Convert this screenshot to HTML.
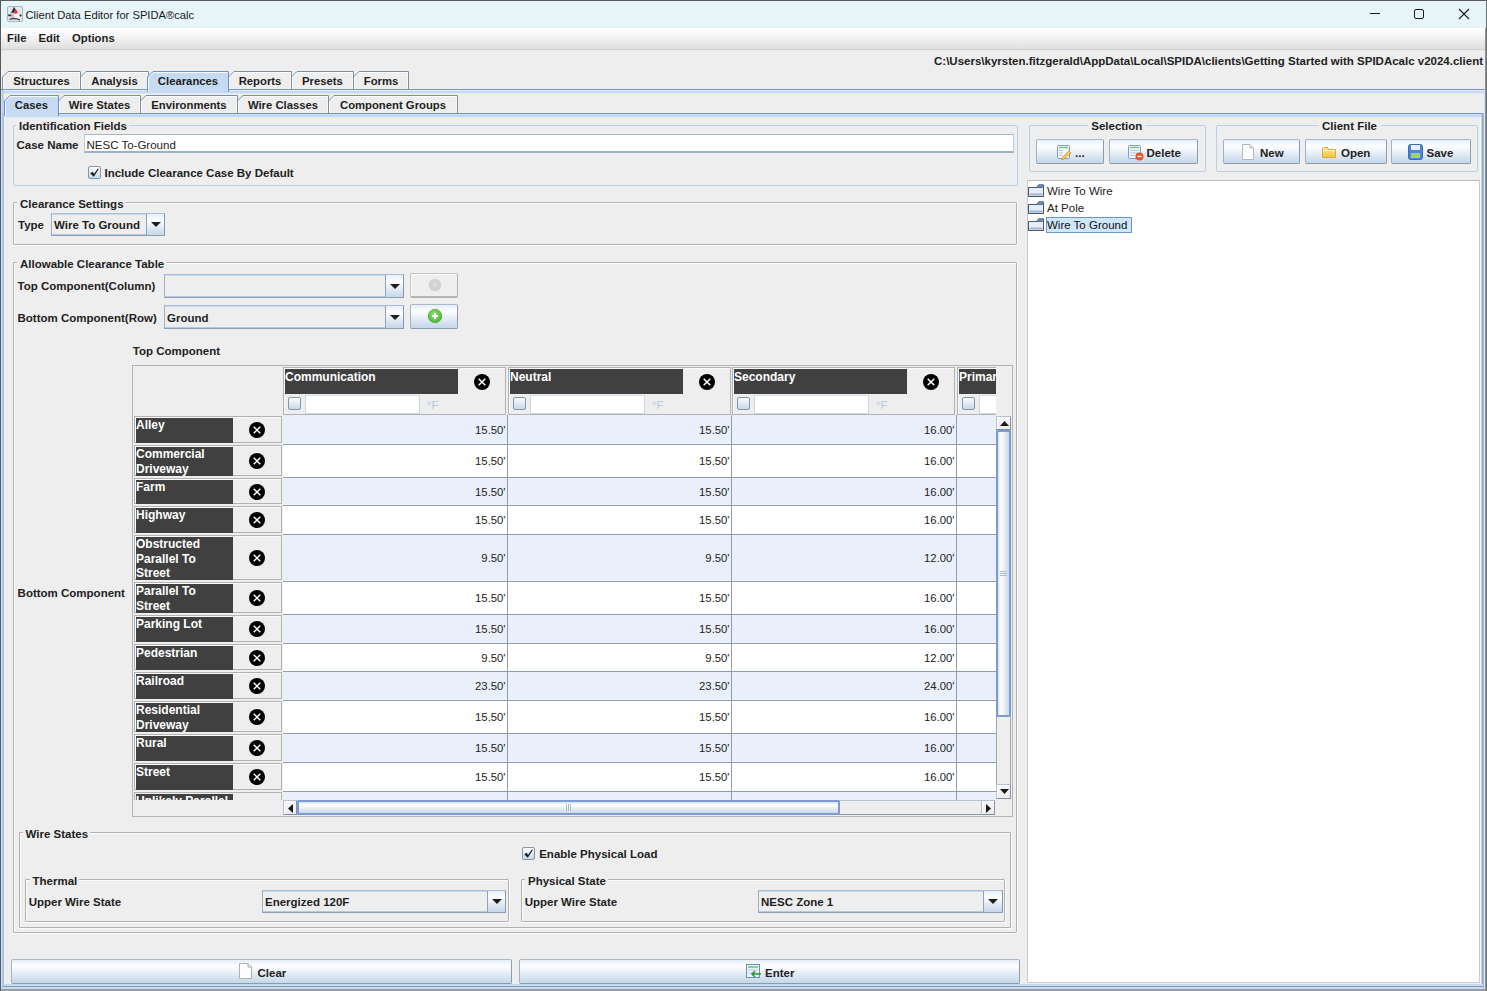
<!DOCTYPE html>
<html><head><meta charset="utf-8"><style>
html,body{margin:0;padding:0;}
body{width:1487px;height:991px;overflow:hidden;position:relative;background:#eeeeee;font-family:"Liberation Sans",sans-serif;}
div{position:absolute;box-sizing:border-box;}
</style></head><body>
<div style="left:0px;top:0px;width:1487px;height:991px;background:#eeeeee"></div>
<div style="left:1px;top:1px;width:1485px;height:27px;background:#e7f5f8"></div>
<svg style="position:absolute;left:7px;top:6px;" width="16" height="16" viewBox="0 0 16 16">
<rect x="0.5" y="0.5" width="15" height="15" rx="1.5" fill="#e8e6ee" stroke="#a7b6c6"/>
<path d="M3.5 8 L7 0.8 L10.5 7 Z" fill="#223030"/>
<path d="M4 7 L11 6 L12.5 13 L4 13 Z" fill="#f4f4f4"/>
<path d="M4 8 L7 7 L7 13 L4 13 Z" fill="#c4c4c4"/>
<circle cx="8.7" cy="5.9" r="1.9" fill="#f2323e"/>
<ellipse cx="2.6" cy="9.3" rx="1.8" ry="1.1" fill="#3a3a30"/>
<ellipse cx="3" cy="8.4" rx="1.2" ry="0.6" fill="#6aa8e0"/>
<circle cx="13.5" cy="9.4" r="1" fill="#1e1e1e"/>
<path d="M2.5 13.3 Q8 11.8 13 14" fill="none" stroke="#3a3a3a" stroke-width="1.2"/>
</svg>
<div style="top:6.92px;height:16px;line-height:16px;font-size:11.2px;font-weight:normal;color:#1a1a1a;font-family:'Liberation Sans',sans-serif;white-space:pre;left:25.5px;">Client Data Editor for SPIDA®calc</div>
<div style="left:1370px;top:13px;width:10px;height:1px;background:#1a1a1a"></div>
<div style="left:1414px;top:9px;width:10px;height:10px;border:1px solid #1a1a1a;border-radius:2px;box-sizing:border-box"></div>
<svg style="position:absolute;left:1458px;top:8px;" width="12" height="12" viewBox="0 0 12 12"><path d="M1 1 L11 11 M11 1 L1 11" stroke="#1a1a1a" stroke-width="1.1"/></svg>
<div style="left:1px;top:28px;width:1485px;height:21px;background:linear-gradient(#ffffff 0%,#f7f7f7 35%,#dedede 100%)"></div>
<div style="left:1px;top:49px;width:1485px;height:1px;background:#d2d2d2"></div>
<div style="left:1px;top:50px;width:1485px;height:1px;background:#e9e9e9"></div>
<div style="top:30.48px;height:16px;line-height:16px;font-size:11.3px;font-weight:bold;color:#1e1e1e;font-family:'Liberation Sans',sans-serif;white-space:pre;left:7px;">File</div>
<div style="top:30.48px;height:16px;line-height:16px;font-size:11.3px;font-weight:bold;color:#1e1e1e;font-family:'Liberation Sans',sans-serif;white-space:pre;left:38.5px;">Edit</div>
<div style="top:30.48px;height:16px;line-height:16px;font-size:11.3px;font-weight:bold;color:#1e1e1e;font-family:'Liberation Sans',sans-serif;white-space:pre;left:72px;">Options</div>
<div style="top:53.02px;height:16px;line-height:16px;font-size:11.5px;font-weight:bold;color:#222;font-family:'Liberation Sans',sans-serif;white-space:pre;left:483px;width:1000px;text-align:right;">C:\Users\kyrsten.fitzgerald\AppData\Local\SPIDA\clients\Getting Started with SPIDAcalc v2024.client</div>
<svg style="position:absolute;left:2px;top:71px;" width="79" height="18" viewBox="0 0 79 18"><path d="M0.5 18 L0.5 6.0 L6.0 0.5 L78.5 0.5 L78.5 18" fill="#eeeeee" stroke="#7f8e9e" stroke-width="1"/><path d="M1.5 18 L1.5 6.5 L6.5 1.5 L77.5 1.5" fill="none" stroke="#ffffff" stroke-opacity="0.85" stroke-width="1"/><path d="M77.5 1.5 L77.5 18" fill="none" stroke="#ffffff" stroke-opacity="0.6" stroke-width="1"/></svg>
<div style="top:73.08px;height:16px;line-height:16px;font-size:11.3px;font-weight:bold;color:#1e1e1e;font-family:'Liberation Sans',sans-serif;white-space:pre;left:-458.5px;width:1000px;text-align:center;">Structures</div>
<svg style="position:absolute;left:80px;top:71px;" width="69" height="18" viewBox="0 0 69 18"><path d="M0.5 18 L0.5 6.0 L6.0 0.5 L68.5 0.5 L68.5 18" fill="#eeeeee" stroke="#7f8e9e" stroke-width="1"/><path d="M1.5 18 L1.5 6.5 L6.5 1.5 L67.5 1.5" fill="none" stroke="#ffffff" stroke-opacity="0.85" stroke-width="1"/><path d="M67.5 1.5 L67.5 18" fill="none" stroke="#ffffff" stroke-opacity="0.6" stroke-width="1"/></svg>
<div style="top:73.08px;height:16px;line-height:16px;font-size:11.3px;font-weight:bold;color:#1e1e1e;font-family:'Liberation Sans',sans-serif;white-space:pre;left:-385.5px;width:1000px;text-align:center;">Analysis</div>
<svg style="position:absolute;left:228px;top:71px;" width="64" height="18" viewBox="0 0 64 18"><path d="M0.5 18 L0.5 6.0 L6.0 0.5 L63.5 0.5 L63.5 18" fill="#eeeeee" stroke="#7f8e9e" stroke-width="1"/><path d="M1.5 18 L1.5 6.5 L6.5 1.5 L62.5 1.5" fill="none" stroke="#ffffff" stroke-opacity="0.85" stroke-width="1"/><path d="M62.5 1.5 L62.5 18" fill="none" stroke="#ffffff" stroke-opacity="0.6" stroke-width="1"/></svg>
<div style="top:73.08px;height:16px;line-height:16px;font-size:11.3px;font-weight:bold;color:#1e1e1e;font-family:'Liberation Sans',sans-serif;white-space:pre;left:-240.0px;width:1000px;text-align:center;">Reports</div>
<svg style="position:absolute;left:291px;top:71px;" width="63" height="18" viewBox="0 0 63 18"><path d="M0.5 18 L0.5 6.0 L6.0 0.5 L62.5 0.5 L62.5 18" fill="#eeeeee" stroke="#7f8e9e" stroke-width="1"/><path d="M1.5 18 L1.5 6.5 L6.5 1.5 L61.5 1.5" fill="none" stroke="#ffffff" stroke-opacity="0.85" stroke-width="1"/><path d="M61.5 1.5 L61.5 18" fill="none" stroke="#ffffff" stroke-opacity="0.6" stroke-width="1"/></svg>
<div style="top:73.08px;height:16px;line-height:16px;font-size:11.3px;font-weight:bold;color:#1e1e1e;font-family:'Liberation Sans',sans-serif;white-space:pre;left:-177.5px;width:1000px;text-align:center;">Presets</div>
<svg style="position:absolute;left:353px;top:71px;" width="56" height="18" viewBox="0 0 56 18"><path d="M0.5 18 L0.5 6.0 L6.0 0.5 L55.5 0.5 L55.5 18" fill="#eeeeee" stroke="#7f8e9e" stroke-width="1"/><path d="M1.5 18 L1.5 6.5 L6.5 1.5 L54.5 1.5" fill="none" stroke="#ffffff" stroke-opacity="0.85" stroke-width="1"/><path d="M54.5 1.5 L54.5 18" fill="none" stroke="#ffffff" stroke-opacity="0.6" stroke-width="1"/></svg>
<div style="top:73.08px;height:16px;line-height:16px;font-size:11.3px;font-weight:bold;color:#1e1e1e;font-family:'Liberation Sans',sans-serif;white-space:pre;left:-119.0px;width:1000px;text-align:center;">Forms</div>
<div style="left:1px;top:89px;width:1485px;height:1px;background:#7b93cc"></div>
<div style="left:1px;top:90px;width:1485px;height:1px;background:#e3ecf7"></div>
<div style="left:1px;top:91px;width:1485px;height:2px;background:#c6daf1"></div>
<div style="left:1px;top:93px;width:1485px;height:1px;background:#dfe8f3"></div>
<div style="left:1px;top:90px;width:1px;height:897px;background:#cfe0f4"></div>
<div style="left:2px;top:90px;width:2px;height:897px;background:#b9d1ee"></div>
<div style="left:1484px;top:90px;width:1px;height:899px;background:#d0e4fc"></div>
<div style="left:1px;top:987px;width:1485px;height:2px;background:#c6daf1"></div>
<svg style="position:absolute;left:147px;top:71px;" width="82" height="21" viewBox="0 0 82 21"><path d="M0.5 21 L0.5 6.0 L6.0 0.5 L81.5 0.5 L81.5 21" fill="#c6dbf1" stroke="#6f8fd0" stroke-width="1"/><path d="M1.5 21 L1.5 6.5 L6.5 1.5 L80.5 1.5" fill="none" stroke="#ffffff" stroke-opacity="0.85" stroke-width="1"/></svg>
<div style="top:73.08px;height:16px;line-height:16px;font-size:11.3px;font-weight:bold;color:#1e1e1e;font-family:'Liberation Sans',sans-serif;white-space:pre;left:-312.0px;width:1000px;text-align:center;">Clearances</div>
<svg style="position:absolute;left:58px;top:95px;" width="83" height="18" viewBox="0 0 83 18"><path d="M0.5 18 L0.5 6.0 L6.0 0.5 L82.5 0.5 L82.5 18" fill="#eeeeee" stroke="#7f8e9e" stroke-width="1"/><path d="M1.5 18 L1.5 6.5 L6.5 1.5 L81.5 1.5" fill="none" stroke="#ffffff" stroke-opacity="0.85" stroke-width="1"/><path d="M81.5 1.5 L81.5 18" fill="none" stroke="#ffffff" stroke-opacity="0.6" stroke-width="1"/></svg>
<div style="top:97.08px;height:16px;line-height:16px;font-size:11.3px;font-weight:bold;color:#1e1e1e;font-family:'Liberation Sans',sans-serif;white-space:pre;left:-400.5px;width:1000px;text-align:center;">Wire States</div>
<svg style="position:absolute;left:140px;top:95px;" width="98" height="18" viewBox="0 0 98 18"><path d="M0.5 18 L0.5 6.0 L6.0 0.5 L97.5 0.5 L97.5 18" fill="#eeeeee" stroke="#7f8e9e" stroke-width="1"/><path d="M1.5 18 L1.5 6.5 L6.5 1.5 L96.5 1.5" fill="none" stroke="#ffffff" stroke-opacity="0.85" stroke-width="1"/><path d="M96.5 1.5 L96.5 18" fill="none" stroke="#ffffff" stroke-opacity="0.6" stroke-width="1"/></svg>
<div style="top:97.08px;height:16px;line-height:16px;font-size:11.3px;font-weight:bold;color:#1e1e1e;font-family:'Liberation Sans',sans-serif;white-space:pre;left:-311.0px;width:1000px;text-align:center;">Environments</div>
<svg style="position:absolute;left:237px;top:95px;" width="92" height="18" viewBox="0 0 92 18"><path d="M0.5 18 L0.5 6.0 L6.0 0.5 L91.5 0.5 L91.5 18" fill="#eeeeee" stroke="#7f8e9e" stroke-width="1"/><path d="M1.5 18 L1.5 6.5 L6.5 1.5 L90.5 1.5" fill="none" stroke="#ffffff" stroke-opacity="0.85" stroke-width="1"/><path d="M90.5 1.5 L90.5 18" fill="none" stroke="#ffffff" stroke-opacity="0.6" stroke-width="1"/></svg>
<div style="top:97.08px;height:16px;line-height:16px;font-size:11.3px;font-weight:bold;color:#1e1e1e;font-family:'Liberation Sans',sans-serif;white-space:pre;left:-217.0px;width:1000px;text-align:center;">Wire Classes</div>
<svg style="position:absolute;left:328px;top:95px;" width="130" height="18" viewBox="0 0 130 18"><path d="M0.5 18 L0.5 6.0 L6.0 0.5 L129.5 0.5 L129.5 18" fill="#eeeeee" stroke="#7f8e9e" stroke-width="1"/><path d="M1.5 18 L1.5 6.5 L6.5 1.5 L128.5 1.5" fill="none" stroke="#ffffff" stroke-opacity="0.85" stroke-width="1"/><path d="M128.5 1.5 L128.5 18" fill="none" stroke="#ffffff" stroke-opacity="0.6" stroke-width="1"/></svg>
<div style="top:97.08px;height:16px;line-height:16px;font-size:11.3px;font-weight:bold;color:#1e1e1e;font-family:'Liberation Sans',sans-serif;white-space:pre;left:-107.0px;width:1000px;text-align:center;">Component Groups</div>
<div style="left:4px;top:113px;width:1480px;height:1px;background:#7b93cc"></div>
<div style="left:4px;top:114px;width:1479px;height:3px;background:#c6daf1"></div>
<div style="left:4px;top:117px;width:1479px;height:1px;background:#e3ebf5"></div>
<div style="left:2px;top:113px;width:2px;height:874px;background:#a9c5ec"></div>
<div style="left:4px;top:114px;width:1px;height:872px;background:#e4edf8"></div>
<div style="left:5px;top:117px;width:1px;height:868px;background:#f3f1f1"></div>
<div style="left:1480px;top:117px;width:1px;height:866px;background:#f4f8fc"></div>
<div style="left:1481px;top:114px;width:1px;height:872px;background:#c8dcf0"></div>
<div style="left:1482px;top:113px;width:1px;height:874px;background:#90a4ba"></div>
<div style="left:1483px;top:113px;width:1px;height:874px;background:#a9bdd4"></div>
<div style="left:3px;top:986px;width:1481px;height:1px;background:#8597ab"></div>
<div style="left:4px;top:984px;width:1479px;height:2px;background:#c6daf1"></div>
<svg style="position:absolute;left:4px;top:95px;" width="55" height="21" viewBox="0 0 55 21"><path d="M0.5 21 L0.5 6.0 L6.0 0.5 L54.5 0.5 L54.5 21" fill="#c6dbf1" stroke="#6f8fd0" stroke-width="1"/><path d="M1.5 21 L1.5 6.5 L6.5 1.5 L53.5 1.5" fill="none" stroke="#ffffff" stroke-opacity="0.85" stroke-width="1"/></svg>
<div style="top:97.08px;height:16px;line-height:16px;font-size:11.3px;font-weight:bold;color:#1e1e1e;font-family:'Liberation Sans',sans-serif;white-space:pre;left:-468.5px;width:1000px;text-align:center;">Cases</div>
<div style="left:13px;top:125px;width:1005px;height:61px;border:1px solid #b9d0e8;border-radius:2px;"></div>
<div style="left:16px;top:123px;width:113px;height:4px;background:#eeeeee"></div>
<div style="top:118.02px;height:16px;line-height:16px;font-size:11.5px;font-weight:bold;color:#222;font-family:'Liberation Sans',sans-serif;white-space:pre;left:19px;">Identification Fields</div>
<div style="top:137.02px;height:16px;line-height:16px;font-size:11.5px;font-weight:bold;color:#222;font-family:'Liberation Sans',sans-serif;white-space:pre;left:16.5px;">Case Name</div>
<div style="left:84px;top:134px;width:930px;height:19px;border:1px solid #c3ccd6;border-top-color:#aab6c3;border-bottom:2px solid #9fb0c4;background:#ffffff;"></div>
<div style="top:137.02px;height:16px;line-height:16px;font-size:11.5px;font-weight:normal;color:#222;font-family:'Liberation Sans',sans-serif;white-space:pre;left:86.5px;">NESC To-Ground</div>
<svg style="position:absolute;left:88px;top:166px;" width="13" height="13" viewBox="0 0 13 13"><defs><linearGradient id="cbg" x1="0" y1="0" x2="0" y2="1"><stop offset="0" stop-color="#ffffff"/><stop offset="1" stop-color="#c4d6e8"/></linearGradient></defs><rect x="0.5" y="0.5" width="12" height="12" rx="1.5" fill="url(#cbg)" stroke="#8296ae"/><path d="M2.2 7.2 L4.8 5.8 L6.0 8.0 L9.8 2.4 L10.8 2.9 L5.8 10.8 Z" fill="#1a1a1a"/></svg>
<div style="top:164.52px;height:16px;line-height:16px;font-size:11.5px;font-weight:bold;color:#222;font-family:'Liberation Sans',sans-serif;white-space:pre;left:104.5px;">Include Clearance Case By Default</div>
<div style="left:13px;top:202px;width:1004px;height:43px;border:1px solid #b1b1b1;border-radius:1px;"></div>
<div style="left:14px;top:203px;width:1002px;height:41px;border-left:1px solid #fbfbfb;border-top:1px solid #fbfbfb;"></div>
<div style="left:13px;top:245px;width:1005px;height:1px;background:#fbfbfb"></div>
<div style="left:1017px;top:202px;width:1px;height:44px;background:#fbfbfb"></div>
<div style="left:17px;top:200px;width:108.5px;height:4px;background:#eeeeee"></div>
<div style="top:195.52px;height:16px;line-height:16px;font-size:11.5px;font-weight:bold;color:#222;font-family:'Liberation Sans',sans-serif;white-space:pre;left:20px;">Clearance Settings</div>
<div style="top:216.52px;height:16px;line-height:16px;font-size:11.5px;font-weight:bold;color:#222;font-family:'Liberation Sans',sans-serif;white-space:pre;left:18px;">Type</div>
<div style="left:51px;top:213px;width:114px;height:23px;border:1px solid #9cb0c6;border-top-color:#a9bfd6;border-bottom-color:#8c9fb4;border-right-color:#8597ad;background:#eeeeee;box-shadow:inset 0 1px 0 #c9d8e8, inset 0 -1px 0 #b9c9da;"></div>
<div style="left:146px;top:214px;width:18px;height:21px;border-left:1px solid #8fa3b9;background:linear-gradient(#e6eef7 0%,#ffffff 30%,#e3ecf5 60%,#c6d7e9 100%);"></div>
<svg style="position:absolute;left:150.5px;top:222.0px;" width="10" height="5.0" viewBox="0 0 10 5.0"><path d="M0 0 L10 0 L5.0 5.0 Z" fill="#1e1e1e"/></svg>
<div style="top:217.02px;height:16px;line-height:16px;font-size:11.5px;font-weight:bold;color:#1e1e1e;font-family:'Liberation Sans',sans-serif;white-space:pre;left:54px;">Wire To Ground</div>
<div style="left:13px;top:262px;width:1004px;height:671px;border:1px solid #b1b1b1;border-radius:1px;"></div>
<div style="left:14px;top:263px;width:1002px;height:669px;border-left:1px solid #fbfbfb;border-top:1px solid #fbfbfb;"></div>
<div style="left:13px;top:933px;width:1005px;height:1px;background:#fbfbfb"></div>
<div style="left:1017px;top:262px;width:1px;height:672px;background:#fbfbfb"></div>
<div style="left:17px;top:260px;width:149.2px;height:4px;background:#eeeeee"></div>
<div style="top:255.82px;height:16px;line-height:16px;font-size:11.5px;font-weight:bold;color:#222;font-family:'Liberation Sans',sans-serif;white-space:pre;left:20px;">Allowable Clearance Table</div>
<div style="top:278.32px;height:16px;line-height:16px;font-size:11.5px;font-weight:bold;color:#222;font-family:'Liberation Sans',sans-serif;white-space:pre;left:17.5px;">Top Component(Column)</div>
<div style="top:310.32px;height:16px;line-height:16px;font-size:11.5px;font-weight:bold;color:#222;font-family:'Liberation Sans',sans-serif;white-space:pre;left:17.5px;">Bottom Component(Row)</div>
<div style="left:164px;top:274px;width:240px;height:24px;border:1px solid #9cb0c6;border-top-color:#a9bfd6;border-bottom-color:#8c9fb4;border-right-color:#8597ad;background:#eeeeee;box-shadow:inset 0 1px 0 #c9d8e8, inset 0 -1px 0 #b9c9da;"></div>
<div style="left:385px;top:275px;width:18px;height:22px;border-left:1px solid #8fa3b9;background:linear-gradient(#e6eef7 0%,#ffffff 30%,#e3ecf5 60%,#c6d7e9 100%);"></div>
<svg style="position:absolute;left:389.5px;top:283.5px;" width="10" height="5.0" viewBox="0 0 10 5.0"><path d="M0 0 L10 0 L5.0 5.0 Z" fill="#1e1e1e"/></svg>
<div style="left:410px;top:273px;width:48px;height:25px;border:1px solid #c6c6c6;border-right-color:#b2b2b2;border-bottom:2px solid #b4b4b4;background:#eeeeee;border-radius:2px;box-shadow:inset 1px 1px 0 #fafafa;"></div>
<svg style="position:absolute;left:427.5px;top:278px;" width="14" height="14" viewBox="0 0 14 14"><circle cx="7" cy="7" r="6.3" fill="#d2d2d2"/><path d="M7 4.5 V9.5 M4.5 7 H9.5" stroke="#dcdcdc" stroke-width="1.6"/></svg>
<div style="left:164px;top:305px;width:240px;height:24px;border:1px solid #9cb0c6;border-top-color:#a9bfd6;border-bottom-color:#8c9fb4;border-right-color:#8597ad;background:#eeeeee;box-shadow:inset 0 1px 0 #c9d8e8, inset 0 -1px 0 #b9c9da;"></div>
<div style="left:385px;top:306px;width:18px;height:22px;border-left:1px solid #8fa3b9;background:linear-gradient(#e6eef7 0%,#ffffff 30%,#e3ecf5 60%,#c6d7e9 100%);"></div>
<svg style="position:absolute;left:389.5px;top:314.5px;" width="10" height="5.0" viewBox="0 0 10 5.0"><path d="M0 0 L10 0 L5.0 5.0 Z" fill="#1e1e1e"/></svg>
<div style="top:309.52px;height:16px;line-height:16px;font-size:11.5px;font-weight:bold;color:#1e1e1e;font-family:'Liberation Sans',sans-serif;white-space:pre;left:167px;">Ground</div>
<div style="left:410px;top:304px;width:48px;height:25px;border:1px solid #8b9bb0;border-top-color:#a9b7c7;border-left-color:#a3b1c2;border-radius:2px;background:linear-gradient(#e6eef7 0%,#fdfeff 25%,#f4f8fc 40%,#dbe6f1 70%,#c5d7e9 100%);"></div>
<svg style="position:absolute;left:426.5px;top:308px;" width="16" height="16" viewBox="0 0 16 16"><defs><radialGradient id="gg" cx="0.45" cy="0.4" r="0.65"><stop offset="0" stop-color="#9ae37a"/><stop offset="1" stop-color="#45b02e"/></radialGradient></defs><circle cx="8" cy="8" r="6.8" fill="url(#gg)" stroke="#52a93c" stroke-width="0.8"/><path d="M8 5 V11 M5 8 H11" stroke="#fff" stroke-width="2"/></svg>
<div style="top:343.42px;height:16px;line-height:16px;font-size:11.5px;font-weight:bold;color:#222;font-family:'Liberation Sans',sans-serif;white-space:pre;left:132.8px;">Top Component</div>
<div style="top:584.62px;height:16px;line-height:16px;font-size:11.5px;font-weight:bold;color:#222;font-family:'Liberation Sans',sans-serif;white-space:pre;left:17.6px;">Bottom Component</div>
<div style="left:132px;top:365px;width:881px;height:452px;border:1px solid #b4b4b4;background:#eeeeee;"></div>
<div style="left:283px;top:415px;width:713px;height:29px;background:#e9f0fc"></div>
<div style="left:283px;top:443px;width:713px;height:1px;background:#f0f5fd"></div>
<div style="left:283px;top:444px;width:713px;height:1px;background:#8e9cad"></div>
<div style="top:421.98px;height:16px;line-height:16px;font-size:11.3px;font-weight:normal;color:#222;font-family:'Liberation Sans',sans-serif;white-space:pre;left:-494.5px;width:1000px;text-align:right;">15.50'</div>
<div style="top:421.98px;height:16px;line-height:16px;font-size:11.3px;font-weight:normal;color:#222;font-family:'Liberation Sans',sans-serif;white-space:pre;left:-270.5px;width:1000px;text-align:right;">15.50'</div>
<div style="top:421.98px;height:16px;line-height:16px;font-size:11.3px;font-weight:normal;color:#222;font-family:'Liberation Sans',sans-serif;white-space:pre;left:-45.5px;width:1000px;text-align:right;">16.00'</div>
<div style="left:283px;top:445px;width:713px;height:32px;background:#ffffff"></div>
<div style="left:283px;top:477px;width:713px;height:1px;background:#8e9cad"></div>
<div style="top:453.48px;height:16px;line-height:16px;font-size:11.3px;font-weight:normal;color:#222;font-family:'Liberation Sans',sans-serif;white-space:pre;left:-494.5px;width:1000px;text-align:right;">15.50'</div>
<div style="top:453.48px;height:16px;line-height:16px;font-size:11.3px;font-weight:normal;color:#222;font-family:'Liberation Sans',sans-serif;white-space:pre;left:-270.5px;width:1000px;text-align:right;">15.50'</div>
<div style="top:453.48px;height:16px;line-height:16px;font-size:11.3px;font-weight:normal;color:#222;font-family:'Liberation Sans',sans-serif;white-space:pre;left:-45.5px;width:1000px;text-align:right;">16.00'</div>
<div style="left:283px;top:478px;width:713px;height:27px;background:#e9f0fc"></div>
<div style="left:283px;top:504px;width:713px;height:1px;background:#f0f5fd"></div>
<div style="left:283px;top:505px;width:713px;height:1px;background:#8e9cad"></div>
<div style="top:483.98px;height:16px;line-height:16px;font-size:11.3px;font-weight:normal;color:#222;font-family:'Liberation Sans',sans-serif;white-space:pre;left:-494.5px;width:1000px;text-align:right;">15.50'</div>
<div style="top:483.98px;height:16px;line-height:16px;font-size:11.3px;font-weight:normal;color:#222;font-family:'Liberation Sans',sans-serif;white-space:pre;left:-270.5px;width:1000px;text-align:right;">15.50'</div>
<div style="top:483.98px;height:16px;line-height:16px;font-size:11.3px;font-weight:normal;color:#222;font-family:'Liberation Sans',sans-serif;white-space:pre;left:-45.5px;width:1000px;text-align:right;">16.00'</div>
<div style="left:283px;top:506px;width:713px;height:28px;background:#ffffff"></div>
<div style="left:283px;top:534px;width:713px;height:1px;background:#8e9cad"></div>
<div style="top:512.48px;height:16px;line-height:16px;font-size:11.3px;font-weight:normal;color:#222;font-family:'Liberation Sans',sans-serif;white-space:pre;left:-494.5px;width:1000px;text-align:right;">15.50'</div>
<div style="top:512.48px;height:16px;line-height:16px;font-size:11.3px;font-weight:normal;color:#222;font-family:'Liberation Sans',sans-serif;white-space:pre;left:-270.5px;width:1000px;text-align:right;">15.50'</div>
<div style="top:512.48px;height:16px;line-height:16px;font-size:11.3px;font-weight:normal;color:#222;font-family:'Liberation Sans',sans-serif;white-space:pre;left:-45.5px;width:1000px;text-align:right;">16.00'</div>
<div style="left:283px;top:535px;width:713px;height:46px;background:#e9f0fc"></div>
<div style="left:283px;top:580px;width:713px;height:1px;background:#f0f5fd"></div>
<div style="left:283px;top:581px;width:713px;height:1px;background:#8e9cad"></div>
<div style="top:550.48px;height:16px;line-height:16px;font-size:11.3px;font-weight:normal;color:#222;font-family:'Liberation Sans',sans-serif;white-space:pre;left:-494.5px;width:1000px;text-align:right;">9.50'</div>
<div style="top:550.48px;height:16px;line-height:16px;font-size:11.3px;font-weight:normal;color:#222;font-family:'Liberation Sans',sans-serif;white-space:pre;left:-270.5px;width:1000px;text-align:right;">9.50'</div>
<div style="top:550.48px;height:16px;line-height:16px;font-size:11.3px;font-weight:normal;color:#222;font-family:'Liberation Sans',sans-serif;white-space:pre;left:-45.5px;width:1000px;text-align:right;">12.00'</div>
<div style="left:283px;top:582px;width:713px;height:32px;background:#ffffff"></div>
<div style="left:283px;top:614px;width:713px;height:1px;background:#8e9cad"></div>
<div style="top:590.48px;height:16px;line-height:16px;font-size:11.3px;font-weight:normal;color:#222;font-family:'Liberation Sans',sans-serif;white-space:pre;left:-494.5px;width:1000px;text-align:right;">15.50'</div>
<div style="top:590.48px;height:16px;line-height:16px;font-size:11.3px;font-weight:normal;color:#222;font-family:'Liberation Sans',sans-serif;white-space:pre;left:-270.5px;width:1000px;text-align:right;">15.50'</div>
<div style="top:590.48px;height:16px;line-height:16px;font-size:11.3px;font-weight:normal;color:#222;font-family:'Liberation Sans',sans-serif;white-space:pre;left:-45.5px;width:1000px;text-align:right;">16.00'</div>
<div style="left:283px;top:615px;width:713px;height:28px;background:#e9f0fc"></div>
<div style="left:283px;top:642px;width:713px;height:1px;background:#f0f5fd"></div>
<div style="left:283px;top:643px;width:713px;height:1px;background:#8e9cad"></div>
<div style="top:621.48px;height:16px;line-height:16px;font-size:11.3px;font-weight:normal;color:#222;font-family:'Liberation Sans',sans-serif;white-space:pre;left:-494.5px;width:1000px;text-align:right;">15.50'</div>
<div style="top:621.48px;height:16px;line-height:16px;font-size:11.3px;font-weight:normal;color:#222;font-family:'Liberation Sans',sans-serif;white-space:pre;left:-270.5px;width:1000px;text-align:right;">15.50'</div>
<div style="top:621.48px;height:16px;line-height:16px;font-size:11.3px;font-weight:normal;color:#222;font-family:'Liberation Sans',sans-serif;white-space:pre;left:-45.5px;width:1000px;text-align:right;">16.00'</div>
<div style="left:283px;top:644px;width:713px;height:27px;background:#ffffff"></div>
<div style="left:283px;top:671px;width:713px;height:1px;background:#8e9cad"></div>
<div style="top:649.98px;height:16px;line-height:16px;font-size:11.3px;font-weight:normal;color:#222;font-family:'Liberation Sans',sans-serif;white-space:pre;left:-494.5px;width:1000px;text-align:right;">9.50'</div>
<div style="top:649.98px;height:16px;line-height:16px;font-size:11.3px;font-weight:normal;color:#222;font-family:'Liberation Sans',sans-serif;white-space:pre;left:-270.5px;width:1000px;text-align:right;">9.50'</div>
<div style="top:649.98px;height:16px;line-height:16px;font-size:11.3px;font-weight:normal;color:#222;font-family:'Liberation Sans',sans-serif;white-space:pre;left:-45.5px;width:1000px;text-align:right;">12.00'</div>
<div style="left:283px;top:672px;width:713px;height:28px;background:#e9f0fc"></div>
<div style="left:283px;top:699px;width:713px;height:1px;background:#f0f5fd"></div>
<div style="left:283px;top:700px;width:713px;height:1px;background:#8e9cad"></div>
<div style="top:678.48px;height:16px;line-height:16px;font-size:11.3px;font-weight:normal;color:#222;font-family:'Liberation Sans',sans-serif;white-space:pre;left:-494.5px;width:1000px;text-align:right;">23.50'</div>
<div style="top:678.48px;height:16px;line-height:16px;font-size:11.3px;font-weight:normal;color:#222;font-family:'Liberation Sans',sans-serif;white-space:pre;left:-270.5px;width:1000px;text-align:right;">23.50'</div>
<div style="top:678.48px;height:16px;line-height:16px;font-size:11.3px;font-weight:normal;color:#222;font-family:'Liberation Sans',sans-serif;white-space:pre;left:-45.5px;width:1000px;text-align:right;">24.00'</div>
<div style="left:283px;top:701px;width:713px;height:32px;background:#ffffff"></div>
<div style="left:283px;top:733px;width:713px;height:1px;background:#8e9cad"></div>
<div style="top:709.48px;height:16px;line-height:16px;font-size:11.3px;font-weight:normal;color:#222;font-family:'Liberation Sans',sans-serif;white-space:pre;left:-494.5px;width:1000px;text-align:right;">15.50'</div>
<div style="top:709.48px;height:16px;line-height:16px;font-size:11.3px;font-weight:normal;color:#222;font-family:'Liberation Sans',sans-serif;white-space:pre;left:-270.5px;width:1000px;text-align:right;">15.50'</div>
<div style="top:709.48px;height:16px;line-height:16px;font-size:11.3px;font-weight:normal;color:#222;font-family:'Liberation Sans',sans-serif;white-space:pre;left:-45.5px;width:1000px;text-align:right;">16.00'</div>
<div style="left:283px;top:734px;width:713px;height:28px;background:#e9f0fc"></div>
<div style="left:283px;top:761px;width:713px;height:1px;background:#f0f5fd"></div>
<div style="left:283px;top:762px;width:713px;height:1px;background:#8e9cad"></div>
<div style="top:740.48px;height:16px;line-height:16px;font-size:11.3px;font-weight:normal;color:#222;font-family:'Liberation Sans',sans-serif;white-space:pre;left:-494.5px;width:1000px;text-align:right;">15.50'</div>
<div style="top:740.48px;height:16px;line-height:16px;font-size:11.3px;font-weight:normal;color:#222;font-family:'Liberation Sans',sans-serif;white-space:pre;left:-270.5px;width:1000px;text-align:right;">15.50'</div>
<div style="top:740.48px;height:16px;line-height:16px;font-size:11.3px;font-weight:normal;color:#222;font-family:'Liberation Sans',sans-serif;white-space:pre;left:-45.5px;width:1000px;text-align:right;">16.00'</div>
<div style="left:283px;top:763px;width:713px;height:28px;background:#ffffff"></div>
<div style="left:283px;top:791px;width:713px;height:1px;background:#8e9cad"></div>
<div style="top:769.48px;height:16px;line-height:16px;font-size:11.3px;font-weight:normal;color:#222;font-family:'Liberation Sans',sans-serif;white-space:pre;left:-494.5px;width:1000px;text-align:right;">15.50'</div>
<div style="top:769.48px;height:16px;line-height:16px;font-size:11.3px;font-weight:normal;color:#222;font-family:'Liberation Sans',sans-serif;white-space:pre;left:-270.5px;width:1000px;text-align:right;">15.50'</div>
<div style="top:769.48px;height:16px;line-height:16px;font-size:11.3px;font-weight:normal;color:#222;font-family:'Liberation Sans',sans-serif;white-space:pre;left:-45.5px;width:1000px;text-align:right;">16.00'</div>
<div style="left:283px;top:792px;width:713px;height:8px;background:#e9f0fc"></div>
<div style="left:507px;top:415px;width:1px;height:385px;background:#8e9cad"></div>
<div style="left:731px;top:415px;width:1px;height:385px;background:#8e9cad"></div>
<div style="left:956px;top:415px;width:1px;height:385px;background:#8e9cad"></div>
<div style="left:134px;top:416px;width:148px;height:27px;border:1px solid #b2b2b2;background:#eeeeee;"></div>
<div style="left:135px;top:417px;width:146px;height:1px;background:#fafafa"></div>
<div style="left:135px;top:417px;width:1px;height:25px;background:#fafafa"></div>
<div style="left:136px;top:418px;width:97px;height:25px;background:#404040"></div>
<div style="left:136px;top:418px;width:110px;font-size:12px;line-height:14.5px;font-weight:bold;color:#fff;white-space:nowrap;">Alley</div>
<svg style="position:absolute;left:249px;top:422.0px;" width="16" height="16" viewBox="0 0 16 16"><circle cx="8" cy="8" r="8" fill="#000"/><path d="M4.7 4.7 L11.3 11.3 M11.3 4.7 L4.7 11.3" stroke="#fff" stroke-width="1.5"/></svg>
<div style="left:134px;top:445px;width:148px;height:31px;border:1px solid #b2b2b2;background:#eeeeee;"></div>
<div style="left:135px;top:446px;width:146px;height:1px;background:#fafafa"></div>
<div style="left:135px;top:446px;width:1px;height:29px;background:#fafafa"></div>
<div style="left:136px;top:447px;width:97px;height:29px;background:#404040"></div>
<div style="left:136px;top:447.2px;width:110px;font-size:12px;line-height:14.5px;font-weight:bold;color:#fff;white-space:nowrap;">Commercial<br>Driveway</div>
<svg style="position:absolute;left:249px;top:453.0px;" width="16" height="16" viewBox="0 0 16 16"><circle cx="8" cy="8" r="8" fill="#000"/><path d="M4.7 4.7 L11.3 11.3 M11.3 4.7 L4.7 11.3" stroke="#fff" stroke-width="1.5"/></svg>
<div style="left:134px;top:478px;width:148px;height:26px;border:1px solid #b2b2b2;background:#eeeeee;"></div>
<div style="left:135px;top:479px;width:146px;height:1px;background:#fafafa"></div>
<div style="left:135px;top:479px;width:1px;height:24px;background:#fafafa"></div>
<div style="left:136px;top:480px;width:97px;height:24px;background:#404040"></div>
<div style="left:136px;top:480.2px;width:110px;font-size:12px;line-height:14.5px;font-weight:bold;color:#fff;white-space:nowrap;">Farm</div>
<svg style="position:absolute;left:249px;top:483.5px;" width="16" height="16" viewBox="0 0 16 16"><circle cx="8" cy="8" r="8" fill="#000"/><path d="M4.7 4.7 L11.3 11.3 M11.3 4.7 L4.7 11.3" stroke="#fff" stroke-width="1.5"/></svg>
<div style="left:134px;top:506px;width:148px;height:27px;border:1px solid #b2b2b2;background:#eeeeee;"></div>
<div style="left:135px;top:507px;width:146px;height:1px;background:#fafafa"></div>
<div style="left:135px;top:507px;width:1px;height:25px;background:#fafafa"></div>
<div style="left:136px;top:508px;width:97px;height:25px;background:#404040"></div>
<div style="left:136px;top:508.2px;width:110px;font-size:12px;line-height:14.5px;font-weight:bold;color:#fff;white-space:nowrap;">Highway</div>
<svg style="position:absolute;left:249px;top:512.0px;" width="16" height="16" viewBox="0 0 16 16"><circle cx="8" cy="8" r="8" fill="#000"/><path d="M4.7 4.7 L11.3 11.3 M11.3 4.7 L4.7 11.3" stroke="#fff" stroke-width="1.5"/></svg>
<div style="left:134px;top:535px;width:148px;height:45px;border:1px solid #b2b2b2;background:#eeeeee;"></div>
<div style="left:135px;top:536px;width:146px;height:1px;background:#fafafa"></div>
<div style="left:135px;top:536px;width:1px;height:43px;background:#fafafa"></div>
<div style="left:136px;top:537px;width:97px;height:43px;background:#404040"></div>
<div style="left:136px;top:537.2px;width:110px;font-size:12px;line-height:14.5px;font-weight:bold;color:#fff;white-space:nowrap;">Obstructed<br>Parallel To<br>Street</div>
<svg style="position:absolute;left:249px;top:550.0px;" width="16" height="16" viewBox="0 0 16 16"><circle cx="8" cy="8" r="8" fill="#000"/><path d="M4.7 4.7 L11.3 11.3 M11.3 4.7 L4.7 11.3" stroke="#fff" stroke-width="1.5"/></svg>
<div style="left:134px;top:582px;width:148px;height:31px;border:1px solid #b2b2b2;background:#eeeeee;"></div>
<div style="left:135px;top:583px;width:146px;height:1px;background:#fafafa"></div>
<div style="left:135px;top:583px;width:1px;height:29px;background:#fafafa"></div>
<div style="left:136px;top:584px;width:97px;height:29px;background:#404040"></div>
<div style="left:136px;top:584.2px;width:110px;font-size:12px;line-height:14.5px;font-weight:bold;color:#fff;white-space:nowrap;">Parallel To<br>Street</div>
<svg style="position:absolute;left:249px;top:590.0px;" width="16" height="16" viewBox="0 0 16 16"><circle cx="8" cy="8" r="8" fill="#000"/><path d="M4.7 4.7 L11.3 11.3 M11.3 4.7 L4.7 11.3" stroke="#fff" stroke-width="1.5"/></svg>
<div style="left:134px;top:615px;width:148px;height:27px;border:1px solid #b2b2b2;background:#eeeeee;"></div>
<div style="left:135px;top:616px;width:146px;height:1px;background:#fafafa"></div>
<div style="left:135px;top:616px;width:1px;height:25px;background:#fafafa"></div>
<div style="left:136px;top:617px;width:97px;height:25px;background:#404040"></div>
<div style="left:136px;top:617.2px;width:110px;font-size:12px;line-height:14.5px;font-weight:bold;color:#fff;white-space:nowrap;">Parking Lot</div>
<svg style="position:absolute;left:249px;top:621.0px;" width="16" height="16" viewBox="0 0 16 16"><circle cx="8" cy="8" r="8" fill="#000"/><path d="M4.7 4.7 L11.3 11.3 M11.3 4.7 L4.7 11.3" stroke="#fff" stroke-width="1.5"/></svg>
<div style="left:134px;top:644px;width:148px;height:26px;border:1px solid #b2b2b2;background:#eeeeee;"></div>
<div style="left:135px;top:645px;width:146px;height:1px;background:#fafafa"></div>
<div style="left:135px;top:645px;width:1px;height:24px;background:#fafafa"></div>
<div style="left:136px;top:646px;width:97px;height:24px;background:#404040"></div>
<div style="left:136px;top:646.2px;width:110px;font-size:12px;line-height:14.5px;font-weight:bold;color:#fff;white-space:nowrap;">Pedestrian</div>
<svg style="position:absolute;left:249px;top:649.5px;" width="16" height="16" viewBox="0 0 16 16"><circle cx="8" cy="8" r="8" fill="#000"/><path d="M4.7 4.7 L11.3 11.3 M11.3 4.7 L4.7 11.3" stroke="#fff" stroke-width="1.5"/></svg>
<div style="left:134px;top:672px;width:148px;height:27px;border:1px solid #b2b2b2;background:#eeeeee;"></div>
<div style="left:135px;top:673px;width:146px;height:1px;background:#fafafa"></div>
<div style="left:135px;top:673px;width:1px;height:25px;background:#fafafa"></div>
<div style="left:136px;top:674px;width:97px;height:25px;background:#404040"></div>
<div style="left:136px;top:674.2px;width:110px;font-size:12px;line-height:14.5px;font-weight:bold;color:#fff;white-space:nowrap;">Railroad</div>
<svg style="position:absolute;left:249px;top:678.0px;" width="16" height="16" viewBox="0 0 16 16"><circle cx="8" cy="8" r="8" fill="#000"/><path d="M4.7 4.7 L11.3 11.3 M11.3 4.7 L4.7 11.3" stroke="#fff" stroke-width="1.5"/></svg>
<div style="left:134px;top:701px;width:148px;height:31px;border:1px solid #b2b2b2;background:#eeeeee;"></div>
<div style="left:135px;top:702px;width:146px;height:1px;background:#fafafa"></div>
<div style="left:135px;top:702px;width:1px;height:29px;background:#fafafa"></div>
<div style="left:136px;top:703px;width:97px;height:29px;background:#404040"></div>
<div style="left:136px;top:703.2px;width:110px;font-size:12px;line-height:14.5px;font-weight:bold;color:#fff;white-space:nowrap;">Residential<br>Driveway</div>
<svg style="position:absolute;left:249px;top:709.0px;" width="16" height="16" viewBox="0 0 16 16"><circle cx="8" cy="8" r="8" fill="#000"/><path d="M4.7 4.7 L11.3 11.3 M11.3 4.7 L4.7 11.3" stroke="#fff" stroke-width="1.5"/></svg>
<div style="left:134px;top:734px;width:148px;height:27px;border:1px solid #b2b2b2;background:#eeeeee;"></div>
<div style="left:135px;top:735px;width:146px;height:1px;background:#fafafa"></div>
<div style="left:135px;top:735px;width:1px;height:25px;background:#fafafa"></div>
<div style="left:136px;top:736px;width:97px;height:25px;background:#404040"></div>
<div style="left:136px;top:736.2px;width:110px;font-size:12px;line-height:14.5px;font-weight:bold;color:#fff;white-space:nowrap;">Rural</div>
<svg style="position:absolute;left:249px;top:740.0px;" width="16" height="16" viewBox="0 0 16 16"><circle cx="8" cy="8" r="8" fill="#000"/><path d="M4.7 4.7 L11.3 11.3 M11.3 4.7 L4.7 11.3" stroke="#fff" stroke-width="1.5"/></svg>
<div style="left:134px;top:763px;width:148px;height:27px;border:1px solid #b2b2b2;background:#eeeeee;"></div>
<div style="left:135px;top:764px;width:146px;height:1px;background:#fafafa"></div>
<div style="left:135px;top:764px;width:1px;height:25px;background:#fafafa"></div>
<div style="left:136px;top:765px;width:97px;height:25px;background:#404040"></div>
<div style="left:136px;top:765.2px;width:110px;font-size:12px;line-height:14.5px;font-weight:bold;color:#fff;white-space:nowrap;">Street</div>
<svg style="position:absolute;left:249px;top:769.0px;" width="16" height="16" viewBox="0 0 16 16"><circle cx="8" cy="8" r="8" fill="#000"/><path d="M4.7 4.7 L11.3 11.3 M11.3 4.7 L4.7 11.3" stroke="#fff" stroke-width="1.5"/></svg>
<div style="left:134px;top:792px;width:148px;height:10px;border:1px solid #b2b2b2;border-bottom:none;background:#eeeeee;"></div>
<div style="left:136px;top:794px;width:97px;height:6px;background:#404040;overflow:hidden;"><div style="position:absolute;left:0;top:0px;font-size:12px;line-height:14.5px;font-weight:bold;color:#fff;white-space:nowrap;">Unlikely Parallel</div></div>
<div style="left:133px;top:800px;width:150px;height:16px;background:#eeeeee"></div>
<div style="left:283px;top:366px;width:713px;height:49px;overflow:hidden;">
<div style="left:0px;top:1px;width:223px;height:48px;border:1px solid #b2b2b2;background:#eeeeee;"><div style="position:absolute;left:0;top:0;width:221px;height:1px;background:#fafafa"></div><div style="position:absolute;left:0;top:0;width:1px;height:46px;background:#fafafa"></div><div style="position:absolute;left:1px;top:1px;width:172.5px;height:25px;background:#404040;"></div><div style="position:absolute;left:1px;top:2px;font-size:12px;line-height:14.5px;font-weight:bold;color:#fff;white-space:nowrap;">Communication</div></div>
<svg style="position:absolute;left:190.5px;top:7.5px;" width="16" height="16" viewBox="0 0 16 16"><circle cx="8" cy="8" r="8" fill="#000"/><path d="M4.7 4.7 L11.3 11.3 M11.3 4.7 L4.7 11.3" stroke="#fff" stroke-width="1.5"/></svg>
<svg style="position:absolute;left:5px;top:31px;" width="13" height="13" viewBox="0 0 13 13"><defs><linearGradient id="cbg" x1="0" y1="0" x2="0" y2="1"><stop offset="0" stop-color="#ffffff"/><stop offset="1" stop-color="#c4d6e8"/></linearGradient></defs><rect x="0.5" y="0.5" width="12" height="12" rx="1.5" fill="url(#cbg)" stroke="#8296ae"/></svg>
<div style="left:22px;top:29px;width:115px;height:19px;border:1px solid #c9d7e6;border-top-color:#d6e1ec;background:#ffffff;border-radius:1px;"></div>
<div style="top:31.02px;height:16px;line-height:16px;font-size:11.5px;font-weight:normal;color:#b9c9da;font-family:'Liberation Sans',sans-serif;white-space:pre;left:144px;">°F</div>
<div style="left:225px;top:1px;width:223px;height:48px;border:1px solid #b2b2b2;background:#eeeeee;"><div style="position:absolute;left:0;top:0;width:221px;height:1px;background:#fafafa"></div><div style="position:absolute;left:0;top:0;width:1px;height:46px;background:#fafafa"></div><div style="position:absolute;left:1px;top:1px;width:172.5px;height:25px;background:#404040;"></div><div style="position:absolute;left:1px;top:2px;font-size:12px;line-height:14.5px;font-weight:bold;color:#fff;white-space:nowrap;">Neutral</div></div>
<svg style="position:absolute;left:415.5px;top:7.5px;" width="16" height="16" viewBox="0 0 16 16"><circle cx="8" cy="8" r="8" fill="#000"/><path d="M4.7 4.7 L11.3 11.3 M11.3 4.7 L4.7 11.3" stroke="#fff" stroke-width="1.5"/></svg>
<svg style="position:absolute;left:230px;top:31px;" width="13" height="13" viewBox="0 0 13 13"><defs><linearGradient id="cbg" x1="0" y1="0" x2="0" y2="1"><stop offset="0" stop-color="#ffffff"/><stop offset="1" stop-color="#c4d6e8"/></linearGradient></defs><rect x="0.5" y="0.5" width="12" height="12" rx="1.5" fill="url(#cbg)" stroke="#8296ae"/></svg>
<div style="left:247px;top:29px;width:115px;height:19px;border:1px solid #c9d7e6;border-top-color:#d6e1ec;background:#ffffff;border-radius:1px;"></div>
<div style="top:31.02px;height:16px;line-height:16px;font-size:11.5px;font-weight:normal;color:#b9c9da;font-family:'Liberation Sans',sans-serif;white-space:pre;left:369px;">°F</div>
<div style="left:449px;top:1px;width:223px;height:48px;border:1px solid #b2b2b2;background:#eeeeee;"><div style="position:absolute;left:0;top:0;width:221px;height:1px;background:#fafafa"></div><div style="position:absolute;left:0;top:0;width:1px;height:46px;background:#fafafa"></div><div style="position:absolute;left:1px;top:1px;width:172.5px;height:25px;background:#404040;"></div><div style="position:absolute;left:1px;top:2px;font-size:12px;line-height:14.5px;font-weight:bold;color:#fff;white-space:nowrap;">Secondary</div></div>
<svg style="position:absolute;left:639.5px;top:7.5px;" width="16" height="16" viewBox="0 0 16 16"><circle cx="8" cy="8" r="8" fill="#000"/><path d="M4.7 4.7 L11.3 11.3 M11.3 4.7 L4.7 11.3" stroke="#fff" stroke-width="1.5"/></svg>
<svg style="position:absolute;left:454px;top:31px;" width="13" height="13" viewBox="0 0 13 13"><defs><linearGradient id="cbg" x1="0" y1="0" x2="0" y2="1"><stop offset="0" stop-color="#ffffff"/><stop offset="1" stop-color="#c4d6e8"/></linearGradient></defs><rect x="0.5" y="0.5" width="12" height="12" rx="1.5" fill="url(#cbg)" stroke="#8296ae"/></svg>
<div style="left:471px;top:29px;width:115px;height:19px;border:1px solid #c9d7e6;border-top-color:#d6e1ec;background:#ffffff;border-radius:1px;"></div>
<div style="top:31.02px;height:16px;line-height:16px;font-size:11.5px;font-weight:normal;color:#b9c9da;font-family:'Liberation Sans',sans-serif;white-space:pre;left:593px;">°F</div>
<div style="left:674px;top:1px;width:223px;height:48px;border:1px solid #b2b2b2;background:#eeeeee;"><div style="position:absolute;left:0;top:0;width:221px;height:1px;background:#fafafa"></div><div style="position:absolute;left:0;top:0;width:1px;height:46px;background:#fafafa"></div><div style="position:absolute;left:1px;top:1px;width:172.5px;height:25px;background:#404040;"></div><div style="position:absolute;left:1px;top:2px;font-size:12px;line-height:14.5px;font-weight:bold;color:#fff;white-space:nowrap;">Primary</div></div>
<svg style="position:absolute;left:864.5px;top:7.5px;" width="16" height="16" viewBox="0 0 16 16"><circle cx="8" cy="8" r="8" fill="#000"/><path d="M4.7 4.7 L11.3 11.3 M11.3 4.7 L4.7 11.3" stroke="#fff" stroke-width="1.5"/></svg>
<svg style="position:absolute;left:679px;top:31px;" width="13" height="13" viewBox="0 0 13 13"><defs><linearGradient id="cbg" x1="0" y1="0" x2="0" y2="1"><stop offset="0" stop-color="#ffffff"/><stop offset="1" stop-color="#c4d6e8"/></linearGradient></defs><rect x="0.5" y="0.5" width="12" height="12" rx="1.5" fill="url(#cbg)" stroke="#8296ae"/></svg>
<div style="left:696px;top:29px;width:115px;height:19px;border:1px solid #c9d7e6;border-top-color:#d6e1ec;background:#ffffff;border-radius:1px;"></div>
<div style="top:31.02px;height:16px;line-height:16px;font-size:11.5px;font-weight:normal;color:#b9c9da;font-family:'Liberation Sans',sans-serif;white-space:pre;left:818px;">°F</div>
</div>
<div style="left:996px;top:366px;width:16px;height:49px;background:#eeeeee"></div>
<div style="left:996px;top:415px;width:1px;height:385px;background:#eeeeee"></div>
<div style="left:996px;top:415px;width:16px;height:386px;background:#eeeeee;"></div>
<div style="left:996px;top:430px;width:15px;height:354px;border-left:1px solid #9aa9ba;border-right:1px solid #9aa9ba;background:#eeeeee;"></div>
<div style="left:996px;top:416px;width:15px;height:14px;border:1px solid #b4c2d0;border-right-color:#8797aa;border-bottom-color:#7f8fa2;box-shadow:inset 1px 1px 0 #ffffff;background:linear-gradient(#f6f6f6,#ececec);"></div>
<svg style="position:absolute;left:1000px;top:421px;" width="9" height="5" viewBox="0 0 9 5"><path d="M0 5 L9 5 L4.5 0 Z" fill="#1a1a1a"/></svg>
<div style="left:996px;top:430px;width:15px;height:287px;border:2px solid #7b9bd2;border-radius:2px;background:linear-gradient(90deg,#d6e3f2 0%,#ffffff 25%,#eef3f9 50%,#c9d9ec 100%);"></div>
<div style="left:1000px;top:571px;width:7px;height:1px;background:#a9bcd6"></div>
<div style="left:1000px;top:573px;width:7px;height:1px;background:#a9bcd6"></div>
<div style="left:1000px;top:575px;width:7px;height:1px;background:#a9bcd6"></div>
<div style="left:996px;top:784px;width:15px;height:15px;border:1px solid #b4c2d0;border-right-color:#8797aa;border-bottom-color:#7f8fa2;box-shadow:inset 1px 1px 0 #ffffff;background:linear-gradient(#f6f6f6,#ececec);"></div>
<svg style="position:absolute;left:1000px;top:789px;" width="9" height="5" viewBox="0 0 9 5"><path d="M0 0 L9 0 L4.5 5 Z" fill="#1a1a1a"/></svg>
<div style="left:283px;top:800px;width:713px;height:16px;background:#eeeeee;"></div>
<div style="left:297px;top:800px;width:684px;height:15px;border-top:1px solid #b8c4d0;border-bottom:1px solid #8e9cac;background:#eeeeee;"></div>
<div style="left:283px;top:800px;width:14px;height:15px;border:1px solid #b4c2d0;border-right-color:#8797aa;border-bottom-color:#7f8fa2;box-shadow:inset 1px 1px 0 #ffffff;background:linear-gradient(#f6f6f6,#ececec);"></div>
<svg style="position:absolute;left:288px;top:804px;" width="5" height="9" viewBox="0 0 5 9"><path d="M5 0 L5 9 L0 4.5 Z" fill="#1a1a1a"/></svg>
<div style="left:297px;top:800px;width:543px;height:15px;border:2px solid #7b9bd2;border-radius:2px;background:linear-gradient(#d6e3f2 0%,#ffffff 25%,#eef3f9 50%,#c9d9ec 100%);"></div>
<div style="left:566px;top:804px;width:1px;height:7px;background:#a9bcd6"></div>
<div style="left:568px;top:804px;width:1px;height:7px;background:#a9bcd6"></div>
<div style="left:570px;top:804px;width:1px;height:7px;background:#a9bcd6"></div>
<div style="left:981px;top:800px;width:14px;height:15px;border:1px solid #b4c2d0;border-right-color:#8797aa;border-bottom-color:#7f8fa2;box-shadow:inset 1px 1px 0 #ffffff;background:linear-gradient(#f6f6f6,#ececec);"></div>
<svg style="position:absolute;left:986px;top:804px;" width="5" height="9" viewBox="0 0 5 9"><path d="M0 0 L0 9 L5 4.5 Z" fill="#1a1a1a"/></svg>
<div style="left:19px;top:832px;width:992px;height:96px;border:1px solid #b1b1b1;border-radius:1px;"></div>
<div style="left:20px;top:833px;width:990px;height:94px;border-left:1px solid #fbfbfb;border-top:1px solid #fbfbfb;"></div>
<div style="left:19px;top:928px;width:993px;height:1px;background:#fbfbfb"></div>
<div style="left:1011px;top:832px;width:1px;height:97px;background:#fbfbfb"></div>
<div style="left:22.5px;top:830px;width:67.5px;height:4px;background:#eeeeee"></div>
<div style="top:825.52px;height:16px;line-height:16px;font-size:11.5px;font-weight:bold;color:#222;font-family:'Liberation Sans',sans-serif;white-space:pre;left:25.5px;">Wire States</div>
<svg style="position:absolute;left:522px;top:847px;" width="13" height="13" viewBox="0 0 13 13"><defs><linearGradient id="cbg" x1="0" y1="0" x2="0" y2="1"><stop offset="0" stop-color="#ffffff"/><stop offset="1" stop-color="#c4d6e8"/></linearGradient></defs><rect x="0.5" y="0.5" width="12" height="12" rx="1.5" fill="url(#cbg)" stroke="#8296ae"/><path d="M2.2 7.2 L4.8 5.8 L6.0 8.0 L9.8 2.4 L10.8 2.9 L5.8 10.8 Z" fill="#1a1a1a"/></svg>
<div style="top:846.02px;height:16px;line-height:16px;font-size:11.5px;font-weight:bold;color:#222;font-family:'Liberation Sans',sans-serif;white-space:pre;left:539.2px;">Enable Physical Load</div>
<div style="left:25px;top:879px;width:484px;height:43px;border:1px solid #b1b1b1;border-radius:1px;"></div>
<div style="left:26px;top:880px;width:482px;height:41px;border-left:1px solid #fbfbfb;border-top:1px solid #fbfbfb;"></div>
<div style="left:25px;top:922px;width:485px;height:1px;background:#fbfbfb"></div>
<div style="left:509px;top:879px;width:1px;height:44px;background:#fbfbfb"></div>
<div style="left:29.5px;top:877px;width:49.7px;height:4px;background:#eeeeee"></div>
<div style="top:872.72px;height:16px;line-height:16px;font-size:11.5px;font-weight:bold;color:#222;font-family:'Liberation Sans',sans-serif;white-space:pre;left:32.5px;">Thermal</div>
<div style="top:893.72px;height:16px;line-height:16px;font-size:11.5px;font-weight:bold;color:#222;font-family:'Liberation Sans',sans-serif;white-space:pre;left:28.7px;">Upper Wire State</div>
<div style="left:262px;top:890px;width:244px;height:23px;border:1px solid #9cb0c6;border-top-color:#a9bfd6;border-bottom-color:#8c9fb4;border-right-color:#8597ad;background:#eeeeee;box-shadow:inset 0 1px 0 #c9d8e8, inset 0 -1px 0 #b9c9da;"></div>
<div style="left:487px;top:891px;width:18px;height:21px;border-left:1px solid #8fa3b9;background:linear-gradient(#e6eef7 0%,#ffffff 30%,#e3ecf5 60%,#c6d7e9 100%);"></div>
<svg style="position:absolute;left:491.5px;top:899.0px;" width="10" height="5.0" viewBox="0 0 10 5.0"><path d="M0 0 L10 0 L5.0 5.0 Z" fill="#1e1e1e"/></svg>
<div style="top:894.02px;height:16px;line-height:16px;font-size:11.5px;font-weight:bold;color:#1e1e1e;font-family:'Liberation Sans',sans-serif;white-space:pre;left:265px;">Energized 120F</div>
<div style="left:521px;top:879px;width:484px;height:43px;border:1px solid #b1b1b1;border-radius:1px;"></div>
<div style="left:522px;top:880px;width:482px;height:41px;border-left:1px solid #fbfbfb;border-top:1px solid #fbfbfb;"></div>
<div style="left:521px;top:922px;width:485px;height:1px;background:#fbfbfb"></div>
<div style="left:1005px;top:879px;width:1px;height:44px;background:#fbfbfb"></div>
<div style="left:525px;top:877px;width:83px;height:4px;background:#eeeeee"></div>
<div style="top:872.52px;height:16px;line-height:16px;font-size:11.5px;font-weight:bold;color:#222;font-family:'Liberation Sans',sans-serif;white-space:pre;left:528px;">Physical State</div>
<div style="top:893.52px;height:16px;line-height:16px;font-size:11.5px;font-weight:bold;color:#222;font-family:'Liberation Sans',sans-serif;white-space:pre;left:524.7px;">Upper Wire State</div>
<div style="left:758px;top:890px;width:245px;height:23px;border:1px solid #9cb0c6;border-top-color:#a9bfd6;border-bottom-color:#8c9fb4;border-right-color:#8597ad;background:#eeeeee;box-shadow:inset 0 1px 0 #c9d8e8, inset 0 -1px 0 #b9c9da;"></div>
<div style="left:983px;top:891px;width:19px;height:21px;border-left:1px solid #8fa3b9;background:linear-gradient(#e6eef7 0%,#ffffff 30%,#e3ecf5 60%,#c6d7e9 100%);"></div>
<svg style="position:absolute;left:988.0px;top:899.0px;" width="10" height="5.0" viewBox="0 0 10 5.0"><path d="M0 0 L10 0 L5.0 5.0 Z" fill="#1e1e1e"/></svg>
<div style="top:894.02px;height:16px;line-height:16px;font-size:11.5px;font-weight:bold;color:#1e1e1e;font-family:'Liberation Sans',sans-serif;white-space:pre;left:761px;">NESC Zone 1</div>
<div style="left:11px;top:959px;width:501px;height:25px;border:1px solid #8b9bb0;border-top-color:#a9b7c7;border-left-color:#a3b1c2;border-radius:2px;background:linear-gradient(#e6eef7 0%,#fdfeff 25%,#f4f8fc 40%,#dbe6f1 70%,#c5d7e9 100%);"></div>
<div style="left:519px;top:959px;width:501px;height:25px;border:1px solid #8b9bb0;border-top-color:#a9b7c7;border-left-color:#a3b1c2;border-radius:2px;background:linear-gradient(#e6eef7 0%,#fdfeff 25%,#f4f8fc 40%,#dbe6f1 70%,#c5d7e9 100%);"></div>
<svg style="position:absolute;left:239px;top:963px;" width="13" height="16" viewBox="0 0 13 16"><path d="M0.5 0.5 H9 L12.5 4 V15.5 H0.5 Z" fill="#fdfdfd" stroke="#b0b0b0"/><path d="M9 0.5 V4 H12.5" fill="#e8e8e8" stroke="#b0b0b0"/></svg>
<div style="top:964.52px;height:16px;line-height:16px;font-size:11.5px;font-weight:bold;color:#222;font-family:'Liberation Sans',sans-serif;white-space:pre;left:257.5px;">Clear</div>
<svg style="position:absolute;left:746px;top:964px;" width="16" height="14" viewBox="0 0 16 14"><rect x="0.5" y="0.5" width="13" height="13" fill="#eef4fb" stroke="#6d8fbf"/><path d="M2 3 H12" stroke="#6cc06c" stroke-width="1.5"/><path d="M2 6 H12 M2 9 H12" stroke="#b9c9dc"/><path d="M15 10 H6 M9 7 L6 10 L9 13" fill="none" stroke="#2e9a2e" stroke-width="1.6"/></svg>
<div style="top:964.52px;height:16px;line-height:16px;font-size:11.5px;font-weight:bold;color:#222;font-family:'Liberation Sans',sans-serif;white-space:pre;left:765px;">Enter</div>
<div style="left:1029px;top:125px;width:177px;height:47px;border:1px solid #b9d0e8;border-radius:2px;"></div>
<div style="left:1088.3px;top:123px;width:57px;height:4px;background:#eeeeee"></div>
<div style="top:118.02px;height:16px;line-height:16px;font-size:11.5px;font-weight:bold;color:#222;font-family:'Liberation Sans',sans-serif;white-space:pre;left:616.8px;width:1000px;text-align:center;">Selection</div>
<div style="left:1216px;top:125px;width:262px;height:47px;border:1px solid #b9d0e8;border-radius:2px;"></div>
<div style="left:1318.5px;top:123px;width:62px;height:4px;background:#eeeeee"></div>
<div style="top:118.02px;height:16px;line-height:16px;font-size:11.5px;font-weight:bold;color:#222;font-family:'Liberation Sans',sans-serif;white-space:pre;left:849.5px;width:1000px;text-align:center;">Client File</div>
<div style="left:1036px;top:139px;width:68px;height:25px;border:1px solid #8b9bb0;border-top-color:#a9b7c7;border-left-color:#a3b1c2;border-radius:2px;background:linear-gradient(#e6eef7 0%,#fdfeff 25%,#f4f8fc 40%,#dbe6f1 70%,#c5d7e9 100%);"></div>
<div style="left:1109px;top:139px;width:89px;height:25px;border:1px solid #8b9bb0;border-top-color:#a9b7c7;border-left-color:#a3b1c2;border-radius:2px;background:linear-gradient(#e6eef7 0%,#fdfeff 25%,#f4f8fc 40%,#dbe6f1 70%,#c5d7e9 100%);"></div>
<div style="left:1223px;top:139px;width:77px;height:25px;border:1px solid #8b9bb0;border-top-color:#a9b7c7;border-left-color:#a3b1c2;border-radius:2px;background:linear-gradient(#e6eef7 0%,#fdfeff 25%,#f4f8fc 40%,#dbe6f1 70%,#c5d7e9 100%);"></div>
<div style="left:1305px;top:139px;width:82px;height:25px;border:1px solid #8b9bb0;border-top-color:#a9b7c7;border-left-color:#a3b1c2;border-radius:2px;background:linear-gradient(#e6eef7 0%,#fdfeff 25%,#f4f8fc 40%,#dbe6f1 70%,#c5d7e9 100%);"></div>
<div style="left:1391px;top:139px;width:80px;height:25px;border:1px solid #8b9bb0;border-top-color:#a9b7c7;border-left-color:#a3b1c2;border-radius:2px;background:linear-gradient(#e6eef7 0%,#fdfeff 25%,#f4f8fc 40%,#dbe6f1 70%,#c5d7e9 100%);"></div>
<svg style="position:absolute;left:1057px;top:145px;" width="15" height="15" viewBox="0 0 15 15"><rect x="0.5" y="0.5" width="12" height="13" rx="1" fill="#f2f6fb" stroke="#7b9ad0"/><path d="M2 2.5 H11" stroke="#75c46a" stroke-width="1.3"/><path d="M2 5.5 H6 M2 8 H6 M2 10.5 H6" stroke="#b6c6da"/><path d="M4 14 L12 6 L14 8 L6 15 Z" fill="#f2d14b" stroke="#c98a2b" stroke-width="0.8"/></svg>
<div style="top:144.52px;height:16px;line-height:16px;font-size:11.5px;font-weight:bold;color:#222;font-family:'Liberation Sans',sans-serif;white-space:pre;left:1075px;">...</div>
<svg style="position:absolute;left:1128px;top:145px;" width="16" height="16" viewBox="0 0 16 16"><rect x="0.5" y="0.5" width="12" height="13" rx="1" fill="#f2f6fb" stroke="#7b9ad0"/><path d="M2 2.5 H11" stroke="#75c46a" stroke-width="1.3"/><path d="M2 5.5 H11 M2 8 H11 M2 10.5 H7" stroke="#b6c6da"/><circle cx="11.5" cy="11.5" r="4" fill="#e8551e"/><path d="M9.5 11.5 H13.5" stroke="#fff" stroke-width="1.4"/></svg>
<div style="top:144.52px;height:16px;line-height:16px;font-size:11.5px;font-weight:bold;color:#222;font-family:'Liberation Sans',sans-serif;white-space:pre;left:1146.5px;">Delete</div>
<svg style="position:absolute;left:1242px;top:144px;" width="12" height="16" viewBox="0 0 12 16"><path d="M0.5 0.5 H8 L11.5 4 V15.5 H0.5 Z" fill="#fbfbfb" stroke="#b8b8b8"/><path d="M8 0.5 V4 H11.5" fill="#e6e6e6" stroke="#b8b8b8"/></svg>
<div style="top:144.52px;height:16px;line-height:16px;font-size:11.5px;font-weight:bold;color:#222;font-family:'Liberation Sans',sans-serif;white-space:pre;left:1260px;">New</div>
<svg style="position:absolute;left:1322px;top:147px;" width="14" height="11" viewBox="0 0 14 11"><defs><linearGradient id="fg" x1="0" y1="0" x2="0" y2="1"><stop offset="0" stop-color="#fde79a"/><stop offset="1" stop-color="#f2c53a"/></linearGradient></defs><path d="M0.5 1.5 L0.5 10.5 H13.5 V2.5 H6.5 L5.5 0.5 H1.5 Z" fill="url(#fg)" stroke="#e0a640"/><path d="M1 3.5 H13" stroke="#fff3c8"/></svg>
<div style="top:144.52px;height:16px;line-height:16px;font-size:11.5px;font-weight:bold;color:#222;font-family:'Liberation Sans',sans-serif;white-space:pre;left:1341px;">Open</div>
<svg style="position:absolute;left:1408px;top:144px;" width="15" height="16" viewBox="0 0 15 16"><rect x="0.5" y="0.5" width="14" height="15" rx="2" fill="#4f86d6" stroke="#3b6cb8"/><rect x="3" y="1" width="9" height="5" fill="#e9f0fa"/><rect x="3" y="9" width="9" height="5" fill="#9ed27a"/></svg>
<div style="top:144.52px;height:16px;line-height:16px;font-size:11.5px;font-weight:bold;color:#222;font-family:'Liberation Sans',sans-serif;white-space:pre;left:1426.5px;">Save</div>
<div style="left:1027px;top:180px;width:453px;height:803px;border:1px solid #c8ccd2;border-top-color:#b8bcc2;background:#ffffff;"></div>
<svg style="position:absolute;left:1028px;top:184px;" width="16" height="13" viewBox="0 0 16 13"><path d="M0.5 3.5 H15.5 V12.5 H0.5 Z" fill="#e7eef7" stroke="#4a5868"/><path d="M0.5 3.5 V12.5 H15.5 V3.5" fill="none" stroke="#4a5868"/><path d="M9 3.5 L10.5 0.8 H15.5 V3.5" fill="#6b8fd1" stroke="#4a5868" stroke-width="0.9"/><path d="M1.5 10.5 H14.5" stroke="#9fb6d6" stroke-width="2"/></svg>
<svg style="position:absolute;left:1028px;top:201px;" width="16" height="13" viewBox="0 0 16 13"><path d="M0.5 3.5 H15.5 V12.5 H0.5 Z" fill="#e7eef7" stroke="#4a5868"/><path d="M0.5 3.5 V12.5 H15.5 V3.5" fill="none" stroke="#4a5868"/><path d="M9 3.5 L10.5 0.8 H15.5 V3.5" fill="#6b8fd1" stroke="#4a5868" stroke-width="0.9"/><path d="M1.5 10.5 H14.5" stroke="#9fb6d6" stroke-width="2"/></svg>
<svg style="position:absolute;left:1028px;top:218px;" width="16" height="13" viewBox="0 0 16 13"><path d="M0.5 3.5 H15.5 V12.5 H0.5 Z" fill="#e7eef7" stroke="#4a5868"/><path d="M0.5 3.5 V12.5 H15.5 V3.5" fill="none" stroke="#4a5868"/><path d="M9 3.5 L10.5 0.8 H15.5 V3.5" fill="#6b8fd1" stroke="#4a5868" stroke-width="0.9"/><path d="M1.5 10.5 H14.5" stroke="#9fb6d6" stroke-width="2"/></svg>
<div style="top:183.02px;height:16px;line-height:16px;font-size:11.5px;font-weight:normal;color:#222;font-family:'Liberation Sans',sans-serif;white-space:pre;left:1047px;">Wire To Wire</div>
<div style="top:200.02px;height:16px;line-height:16px;font-size:11.5px;font-weight:normal;color:#222;font-family:'Liberation Sans',sans-serif;white-space:pre;left:1047px;">At Pole</div>
<div style="left:1046px;top:217px;width:86px;height:16px;background:#cfe6fb;border:1px solid #6f95c8;"></div>
<div style="top:217.32px;height:16px;line-height:16px;font-size:11.5px;font-weight:normal;color:#111;font-family:'Liberation Sans',sans-serif;white-space:pre;left:1047px;">Wire To Ground</div>
<div style="left:0px;top:0px;width:1487px;height:1px;background:#5b5b5b"></div>
<div style="left:0px;top:0px;width:1px;height:991px;background:#5b5b5b"></div>
<div style="left:1485px;top:28px;width:1px;height:963px;background:#8d9399"></div>
<div style="left:1486px;top:0px;width:1px;height:991px;background:#6a6f74"></div>
<div style="left:1px;top:989px;width:1485px;height:2px;background:#959ca3"></div>
</body></html>
